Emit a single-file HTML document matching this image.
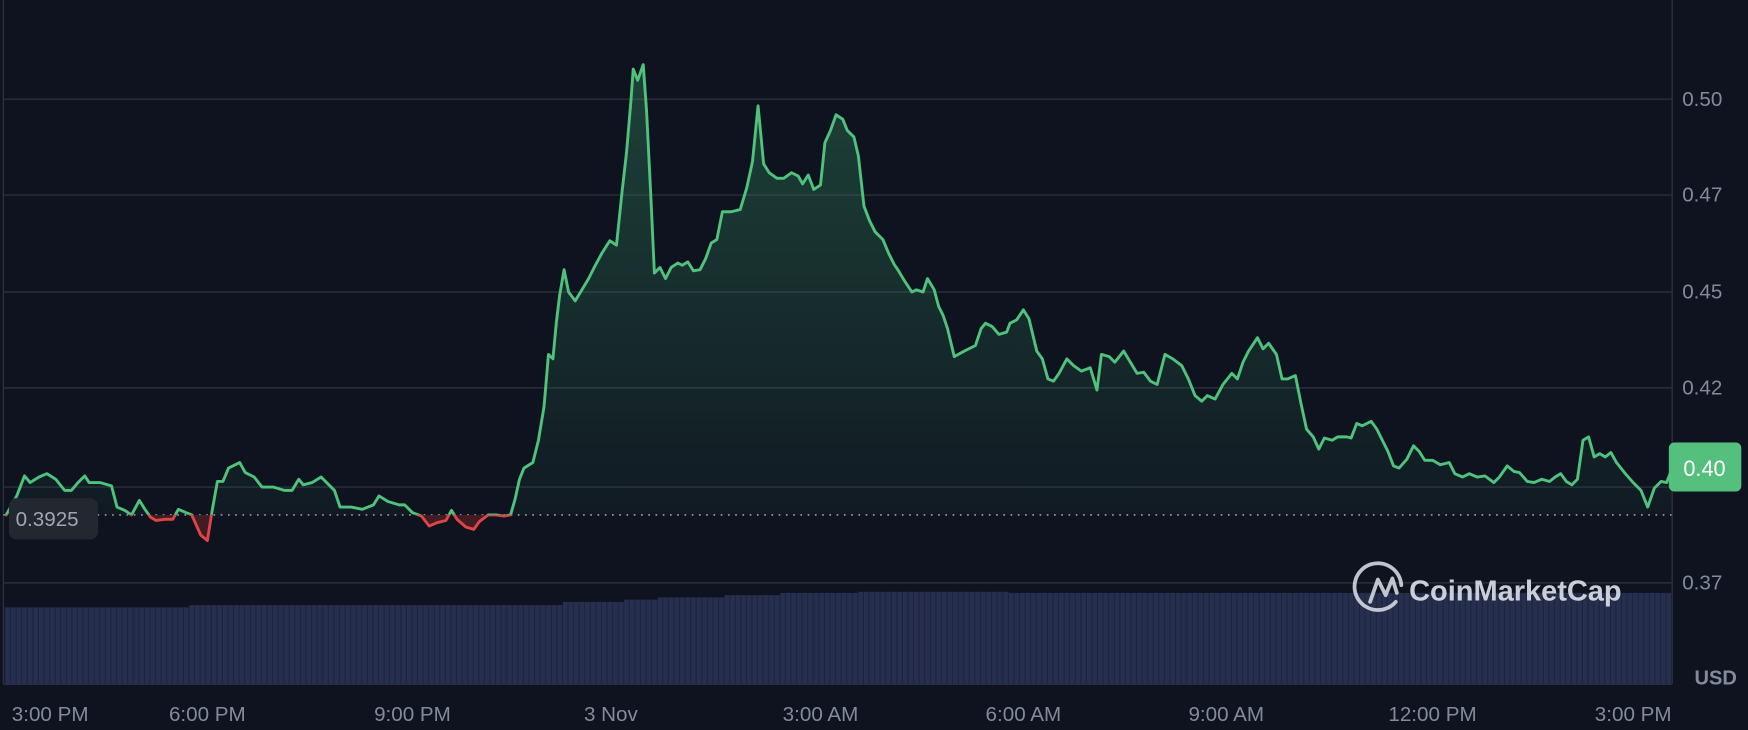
<!DOCTYPE html>
<html><head><meta charset="utf-8"><style>
html,body{margin:0;padding:0;background:#0e131f;}
svg{display:block}
text{font-family:"Liberation Sans",sans-serif;}
</style></head><body>
<svg width="1748" height="730" viewBox="0 0 1568 655" preserveAspectRatio="none" xmlns="http://www.w3.org/2000/svg">
<defs>
<linearGradient id="g" gradientUnits="userSpaceOnUse" x1="0" y1="60" x2="0" y2="462">
<stop offset="0" stop-color="#3fa56e" stop-opacity="0.32"/>
<stop offset="1" stop-color="#3fa56e" stop-opacity="0.05"/>
</linearGradient>
<clipPath id="up"><rect x="0" y="0" width="1500" height="462"/></clipPath>
<clipPath id="dn"><rect x="0" y="462" width="1500" height="200"/></clipPath>
<pattern id="bars" width="5" height="100" patternUnits="userSpaceOnUse">
<rect width="5" height="100" fill="#272f4e"/><rect x="4" width="1" height="100" fill="#1c2340"/>
</pattern>
</defs>
<rect width="1568" height="655" fill="#0e131f"/>
<g stroke="#2a2f3b" stroke-width="1.3">
<line x1="3" y1="89" x2="1500" y2="89"/>
<line x1="3" y1="175" x2="1500" y2="175"/>
<line x1="3" y1="262" x2="1500" y2="262"/>
<line x1="3" y1="348" x2="1500" y2="348"/>
<line x1="3" y1="437" x2="1500" y2="437"/>
<line x1="3" y1="523" x2="1500" y2="523"/>
<line x1="3" y1="0" x2="3" y2="614"/>
<line x1="1500" y1="0" x2="1500" y2="614"/>
<line x1="3" y1="614" x2="1500" y2="614"/>
</g>
<polygon fill="url(#bars)" points="4,545 170,545 170,543 505,543 505,540 560,540 560,538 590,538 590,536 650,536 650,534 700,534 700,532 770,532 770,531 905,531 905,532 1499,532 1499,614 4,614"/>
<line x1="3" y1="462" x2="1500" y2="462" stroke="#9aa0ad" stroke-width="1.5" stroke-dasharray="1.5,5"/>
<defs>
<path id="ln" d="M5,463 L15,445 22,427 27,433 35,428 42,425 50,430 58,440 64,440 70,433 76,427 80,433 90,433 100,436 105,455 112,458 118,462 125,449 130,457 135,464 140,467 148,466 155,466 160,457 167,460 172,462 180,480 186,485 190,460 195,432 200,432 205,420 215,415 220,424 228,428 235,437 245,437 255,440 262,440 268,430 272,435 280,433 288,428 295,435 300,440 305,455 315,455 325,457 335,453 340,445 348,450 358,453 363,453 370,460 378,463 385,472 392,469 400,467 405,458 410,466 418,473 425,475 430,468 438,462 445,462 452,463 458,462 462,448 466,430 470,420 478,415 483,395 488,365 492,318 496,322 499,290 502,265 506,242 510,262 516,270 522,260 528,250 533,240 540,227 547,216 553,220 558,172 562,137 566,90 568,62 572,72 577,58 580,100 584,180 587,245 592,240 597,250 602,240 608,236 612,238 617,235 622,243 628,242 633,232 638,218 643,215 648,190 656,190 664,188 670,168 675,145 680,95 685,147 690,155 697,160 703,160 710,155 716,158 720,165 725,157 730,170 736,166 740,128 745,117 750,103 756,107 760,117 766,123 770,140 775,185 780,198 785,208 792,215 797,227 802,237 806,243 812,253 818,262 822,260 828,262 832,250 838,260 842,275 846,283 850,295 856,320 865,315 875,310 880,295 884,290 890,293 896,300 903,298 906,290 912,287 918,278 923,286 930,315 935,322 940,340 945,342 950,335 957,322 963,328 970,333 978,330 984,350 988,318 995,320 1000,325 1008,315 1014,325 1020,335 1026,334 1032,342 1038,345 1045,318 1052,322 1060,328 1066,340 1072,355 1078,360 1083,355 1090,358 1097,345 1105,335 1110,340 1115,325 1120,315 1128,303 1133,313 1138,308 1145,318 1150,340 1155,340 1162,337 1167,362 1172,385 1178,392 1183,403 1188,393 1195,395 1200,392 1208,392 1212,393 1217,380 1222,382 1230,378 1235,385 1240,395 1245,405 1250,418 1255,420 1262,412 1268,400 1273,405 1278,413 1285,413 1292,417 1300,415 1305,425 1312,428 1318,425 1325,428 1332,427 1340,433 1345,428 1352,418 1358,423 1363,424 1370,432 1376,433 1383,430 1390,432 1395,428 1400,425 1405,432 1410,435 1415,430 1420,395 1425,392 1430,410 1435,407 1440,410 1445,406 1450,415 1458,425 1465,433 1472,440 1478,455 1484,438 1490,432 1495,433 1500,420"/>
</defs>
<g clip-path="url(#up)">
<svg overflow="visible"><use href="#ln" fill="none"/></svg>
</g>
<path id="area" fill="none" d=""/>
<g clip-path="url(#up)">
<path fill="url(#g)" d="M5,462 L5,463 L15,445 22,427 27,433 35,428 42,425 50,430 58,440 64,440 70,433 76,427 80,433 90,433 100,436 105,455 112,458 118,462 125,449 130,457 135,464 140,467 148,466 155,466 160,457 167,460 172,462 180,480 186,485 190,460 195,432 200,432 205,420 215,415 220,424 228,428 235,437 245,437 255,440 262,440 268,430 272,435 280,433 288,428 295,435 300,440 305,455 315,455 325,457 335,453 340,445 348,450 358,453 363,453 370,460 378,463 385,472 392,469 400,467 405,458 410,466 418,473 425,475 430,468 438,462 445,462 452,463 458,462 462,448 466,430 470,420 478,415 483,395 488,365 492,318 496,322 499,290 502,265 506,242 510,262 516,270 522,260 528,250 533,240 540,227 547,216 553,220 558,172 562,137 566,90 568,62 572,72 577,58 580,100 584,180 587,245 592,240 597,250 602,240 608,236 612,238 617,235 622,243 628,242 633,232 638,218 643,215 648,190 656,190 664,188 670,168 675,145 680,95 685,147 690,155 697,160 703,160 710,155 716,158 720,165 725,157 730,170 736,166 740,128 745,117 750,103 756,107 760,117 766,123 770,140 775,185 780,198 785,208 792,215 797,227 802,237 806,243 812,253 818,262 822,260 828,262 832,250 838,260 842,275 846,283 850,295 856,320 865,315 875,310 880,295 884,290 890,293 896,300 903,298 906,290 912,287 918,278 923,286 930,315 935,322 940,340 945,342 950,335 957,322 963,328 970,333 978,330 984,350 988,318 995,320 1000,325 1008,315 1014,325 1020,335 1026,334 1032,342 1038,345 1045,318 1052,322 1060,328 1066,340 1072,355 1078,360 1083,355 1090,358 1097,345 1105,335 1110,340 1115,325 1120,315 1128,303 1133,313 1138,308 1145,318 1150,340 1155,340 1162,337 1167,362 1172,385 1178,392 1183,403 1188,393 1195,395 1200,392 1208,392 1212,393 1217,380 1222,382 1230,378 1235,385 1240,395 1245,405 1250,418 1255,420 1262,412 1268,400 1273,405 1278,413 1285,413 1292,417 1300,415 1305,425 1312,428 1318,425 1325,428 1332,427 1340,433 1345,428 1352,418 1358,423 1363,424 1370,432 1376,433 1383,430 1390,432 1395,428 1400,425 1405,432 1410,435 1415,430 1420,395 1425,392 1430,410 1435,407 1440,410 1445,406 1450,415 1458,425 1465,433 1472,440 1478,455 1484,438 1490,432 1495,433 1500,420 L1500,462 Z"/>
<use href="#ln" fill="none" stroke="#4fc27c" stroke-width="2.6" stroke-linejoin="round"/>
</g>
<g clip-path="url(#dn)">
<path fill="#4a1f26" fill-opacity="0.85" d="M5,462 L5,463 L15,445 L118,462 125,449 130,457 135,464 140,467 148,466 155,466 160,457 167,460 172,462 180,480 186,485 190,460 L370,460 378,463 385,472 392,469 400,467 405,458 410,466 418,473 425,475 430,468 438,462 445,462 452,463 458,462 L1500,462 Z"/>
<use href="#ln" fill="none" stroke="#e04545" stroke-width="2.6" stroke-linejoin="round"/>
</g>
<rect x="1500" y="0" width="68" height="655" fill="#0e131f"/>
<line x1="1500" y1="0" x2="1500" y2="614" stroke="#2a2f3b" stroke-width="1.3"/>
<g fill="#828a9c" font-size="18.5">
<text x="1509" y="95">0.50</text>
<text x="1509" y="181">0.47</text>
<text x="1509" y="268">0.45</text>
<text x="1509" y="354">0.42</text>
<text x="1509" y="529">0.37</text>
<text x="1520" y="614" font-weight="bold" font-size="18">USD</text>
</g>
<rect x="1497" y="397" width="65" height="44" rx="5" fill="#55c07e"/>
<text x="1510" y="427" fill="#fff" font-size="19.5">0.40</text>
<rect x="8" y="447" width="80" height="37" rx="7" fill="#23272f"/>
<text x="14" y="472" fill="#a0a6b3" font-size="18.5">0.3925</text>
<g fill="#828a9c" font-size="18.5" text-anchor="middle">
<text x="45" y="647">3:00 PM</text>
<text x="186" y="647">6:00 PM</text>
<text x="370" y="647">9:00 PM</text>
<text x="548" y="647">3 Nov</text>
<text x="736" y="647">3:00 AM</text>
<text x="918" y="647">6:00 AM</text>
<text x="1100" y="647">9:00 AM</text>
<text x="1285" y="647">12:00 PM</text>
<text x="1465" y="647">3:00 PM</text>
</g>
<g opacity="0.85" fill="none" stroke="#dfe2ea" stroke-width="3.4" stroke-linecap="round" stroke-linejoin="round">
<path d="M1252,540 A21,21 0 1 1 1257,525"/>
<path d="M1229,540 L1236,520 L1243,534 L1249,519 L1253,532"/>
</g>
<text x="1264" y="539" fill="#dfe2ea" fill-opacity="0.9" font-size="26" font-weight="bold">CoinMarketCap</text>
</svg>
</body></html>
